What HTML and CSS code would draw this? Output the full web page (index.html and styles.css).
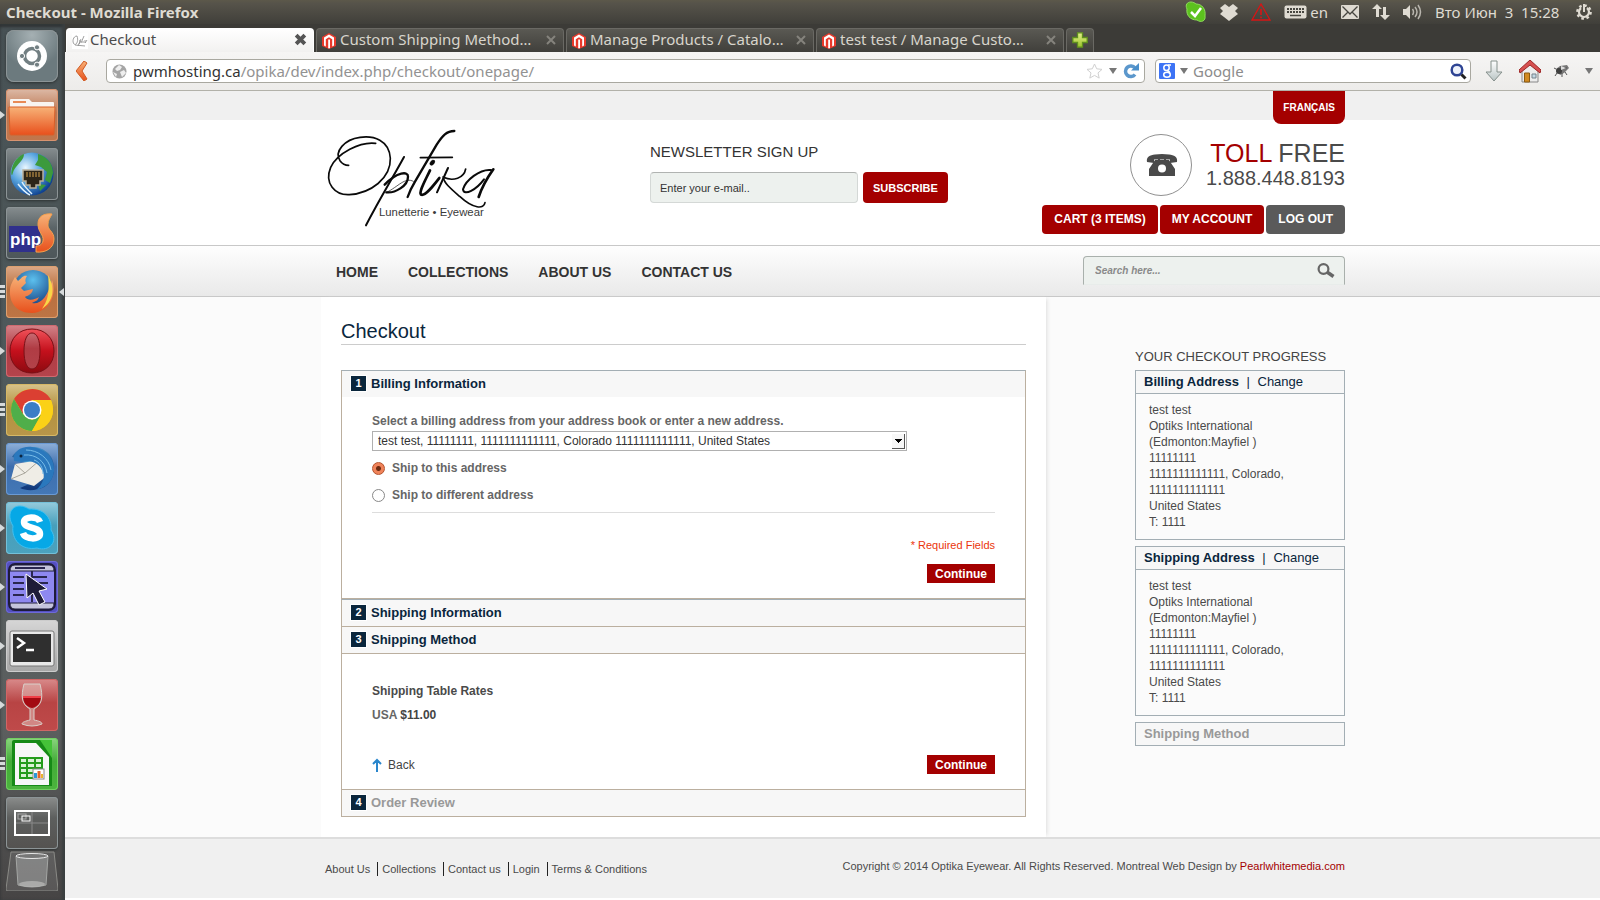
FILE: index.html
```html
<!DOCTYPE html>
<html lang="en">
<head>
<meta charset="utf-8">
<title>Checkout</title>
<link rel="stylesheet" href="styles.css">
</head>
<body>
<svg class="defs" aria-hidden="true">
  <defs>
    <linearGradient id="gOrange" x1="0" y1="0" x2="0" y2="1"><stop offset="0" stop-color="#f7b277"/><stop offset="1" stop-color="#e8501c"/></linearGradient>
    <linearGradient id="gRed" x1="0" y1="0" x2="0" y2="1"><stop offset="0" stop-color="#f0525a"/><stop offset=".5" stop-color="#c4101c"/><stop offset="1" stop-color="#8c0a10"/></linearGradient>
    <radialGradient id="gGlobe" cx=".35" cy=".35" r=".7"><stop offset="0" stop-color="#e8f6ff"/><stop offset=".5" stop-color="#5aa7e0"/><stop offset="1" stop-color="#0c3f8e"/></radialGradient>
    <radialGradient id="gBlue" cx=".5" cy=".25" r=".7"><stop offset="0" stop-color="#5cc0ee"/><stop offset="1" stop-color="#123a7c"/></radialGradient>
    <linearGradient id="gSilver" x1="0" y1="0" x2="0" y2="1"><stop offset="0" stop-color="#fff"/><stop offset="1" stop-color="#b9c4c4"/></linearGradient>
    <linearGradient id="gLime" x1="0" y1="0" x2="0" y2="1"><stop offset="0" stop-color="#e4f08a"/><stop offset="1" stop-color="#9cc42c"/></linearGradient>
    <symbol id="magento" viewBox="0 0 14 16"><path d="M7 0l7 4v9l-7 3-7-3V4z" fill="#e8392b"/><path d="M7 1.6L2 4.6v8l1.8.9V6.2L7 4.2l3.200 2v7.300L12 12.600v-8z" fill="#fff"/><path d="M6.200 6.500h1.800v8.500l-1 .4-.8-.4z" fill="#fff"/></symbol>
    <symbol id="close" viewBox="0 0 12 12"><path d="M2 2l8 8M10 2l-8 8" fill="none" stroke="currentColor" stroke-width="2"/></symbol>
    <symbol id="close-bold" viewBox="0 0 12 12"><path d="M2 2l8 8M10 2l-8 8" fill="none" stroke="currentColor" stroke-width="3.600"/></symbol>
    <symbol id="caret" viewBox="0 0 8 6"><path d="M0 0h8L4 6z" fill="currentColor"/></symbol>
  </defs>
</svg>

<header class="panel">
  <span class="panel-title">Checkout - Mozilla Firefox</span>
  <div class="indicators">
    <svg width="22" height="22" viewBox="0 0 22 22"><path d="M6 1C2 1 0 4 2 8c-1 6 3 11 10 11 4 3 9 1 8-4 1-7-3-12-9-12C10 2 8 1 6 1z" fill="#5cc21e" stroke="#8fdc5c"/><path d="M6 11l4 4 6-8" fill="none" stroke="#fff" stroke-width="2.500"/></svg>
    <svg width="18" height="18" viewBox="0 0 18 18" fill="#dfdbd2"><path d="M5 1l4 3 4-3 5 4-3 3 3 3-4 3-5 4-5-4-4-3 3-3-3-3z"/></svg>
    <svg width="20" height="18" viewBox="0 0 20 18" fill="none" stroke="#d81414"><path d="M10 1l9 16H1z" stroke-width="1.300"/><path d="M10 6v6M10 13.500v1.800" stroke-width="1.600"/></svg>
    <span class="lang"><svg width="23" height="14" viewBox="0 0 23 14"><rect x=".5" y=".5" width="22" height="13" rx="2" fill="#dfdbd2"/><path d="M3 4h17M3 7h17" stroke="#474640" stroke-width="2" stroke-dasharray="2 1"/><path d="M6 10.500h11" stroke="#474640" stroke-width="1.500"/></svg>en</span>
    <svg width="18" height="14" viewBox="0 0 18 14"><rect width="18" height="14" rx="1" fill="#dfdbd2"/><path d="M1.500 1.500L9 9l7.500-7.500M1.500 12.500L7 7M16.500 12.500L11 7" fill="none" stroke="#474640" stroke-width="1.300"/></svg>
    <svg width="18" height="18" viewBox="0 0 18 18" fill="#dfdbd2"><path d="M5 1l5 5H7v8H4V6H0zM13 17l-5-5h3V4h3v8h4z"/></svg>
    <svg width="19" height="16" viewBox="0 0 19 16"><path d="M0 5h3l4-4v14l-4-4H0z" fill="#dfdbd2"/><path d="M9.500 5q2 3 0 6M12 3q4 5 0 10M15 1q5 7 0 14" fill="none" stroke="#b9b6ae" stroke-width="1.500"/></svg>
    <time class="clock">Вто Июн&nbsp; 3 &nbsp;15:28</time>
    <svg width="16" height="16" viewBox="0 0 16 16" fill="none" stroke="#dfdbd2"><circle cx="8" cy="8" r="6.600" stroke-width="2.500" stroke-dasharray="2.600 2.580"/><path d="M5 4a5 5 0 1 0 6 0" stroke-width="2.200"/><path d="M8 0v8" stroke-width="2"/></svg>
  </div>
</header>

<div class="desktop">
  <nav class="launcher" aria-label="Launcher">
    <a href="#" class="tile t-dash" aria-label="Dash"><svg viewBox="0 0 52 52"><circle cx="26" cy="26" r="15" fill="#fff"/><circle cx="26" cy="26" r="7.500" fill="none" stroke="#727f82" stroke-width="3.500"/><g fill="#727f82" stroke="#fff"><circle cx="16" cy="26" r="2.600"/><circle cx="31" cy="17.300" r="2.600"/><circle cx="31" cy="34.700" r="2.600"/></g></svg></a>
    <a href="#" class="tile t-files run" aria-label="Files"><svg viewBox="0 0 52 52"><path d="M4 11q0-1 1-1h18l3 3h21q1 0 1 1v5H4z" fill="#f8f4f0"/><path d="M7 13h13" stroke="#e88a55" stroke-width="2"/><path d="M3 18h46l-1 27q0 1-1 1H5q-1 0-1-1z" fill="url(#gOrange)" stroke="#d8602a"/></svg></a>
    <a href="#" class="tile" aria-label="Network"><svg viewBox="0 0 52 52"><circle cx="26" cy="26" r="21.500" fill="url(#gGlobe)"/><path d="M7 17c2-5 6-9 11-11 0 5-4 8-8 13s-3 8-4 8-1-5 1-10zM32 6c8 2 15 9 15 19l-3 10-5-3 2-8-6-5-6-2 3-5zM32 36l8 1-6 6z" fill="#3c9a3c"/><path d="M12 36c3 4 6 8 12 11M16 34c2 4 6 8 10 12" stroke="#dff2ff" fill="none" stroke-width="1.500"/><path d="M17 22h20v11h-3v4h-4v3h-6v-3h-4v-4h-3z" fill="#2c2518" stroke="#b9b09a" stroke-width="1.500"/><path d="M21 24v5M24 24v5M27 24v5M30 24v5M33 24v5" stroke="#d4a24c"/></svg></a>
    <a href="#" class="tile" aria-label="PhpStorm"><svg viewBox="0 0 52 52"><rect x="3" y="19" width="31" height="26" fill="#30308c"/><text x="4" y="38" class="php">php</text><path d="M46 7c-9-1-14 3-14 10 0 9 6 10 5 17-1 4-4 5-7 5v6c10 1 18-4 18-13 0-8-7-9-6-15 0-4 2-6 4-10z" fill="url(#gOrange)" stroke="#f7a04c"/></svg></a>
    <a href="#" class="tile t-fox multi active" aria-label="Firefox"><svg viewBox="0 0 52 52"><circle cx="27" cy="24" r="20" fill="url(#gBlue)"/><path d="M46 14c5 15-2 32-20 33C10 47 3 36 4 24c0-5 3-9 5-13l3 4c4-3 5-6 9-5-2 3-2 5-1 7l-5 5 3 3 9-2c-1 7-8 7-8 8 3 5 11 2 14 0-2 4-1 3-7 6 8 2 16-6 20-23z" fill="url(#gOrange)"/><path d="M42 9c8 14 5 27-6 34 5-8 8-14 6-34z" fill="#f8d648"/></svg></a>
    <a href="#" class="tile t-opera run" aria-label="Opera"><svg viewBox="0 0 52 52"><path fill-rule="evenodd" d="M26 4c13 0 22 9 22 22s-9 22-22 22S4 39 4 26 13 4 26 4zm0 4c-5 0-8 7-8 18s3 18 8 18 8-7 8-18-3-18-8-18z" fill="url(#gRed)" stroke="#7a1016"/></svg></a>
    <a href="#" class="tile t-chrome multi" aria-label="Chrome"><svg viewBox="0 0 52 52"><circle cx="26" cy="26" r="21" fill="#f9c80e"/><path d="M8 15C16 2 37 1 45 16H26l-9 14z" fill="#db3f32"/><path d="M8 15C0 29 9 46 26 47l9-16-9 5-9-6z" fill="#4fae4a"/><path d="M26 16h19c1 2 2 6 2 10 0 11-9 21-21 21l9-16z" fill="#fbd117"/><circle cx="26" cy="26" r="9.500" fill="#fff"/><circle cx="26" cy="26" r="8" fill="#3b7dc6"/></svg></a>
    <a href="#" class="tile t-bird run" aria-label="Thunderbird"><svg viewBox="0 0 52 52"><path d="M6 14C12 3 32 0 42 10c10 10 7 28-4 34-8 4-18 4-24 1L30 38 16 16z" fill="url(#gBlue)"/><path d="M9 21l25-4 8 15-14 11L5 36z" fill="#efede6"/><path d="M9 21l10 9 15-13M19 30L5 36" stroke="#a9a69c" fill="none"/><path d="M8 18C6 8 16 3 26 4c14 2 23 12 22 24-1 10-8 17-18 19 7-6 10-14 6-20-4-8-12-10-20-8z" fill="#2a78bd"/><path d="M20 7c12 0 23 8 25 20M18 12c12-1 21 6 23 18M28 17c6 2 9 8 9 14" stroke="#77bce8" fill="none"/><circle cx="15" cy="13" r="1.500" fill="#0c2540"/></svg></a>
    <a href="#" class="tile t-skype run" aria-label="Skype"><svg viewBox="0 0 52 52"><path d="M14 4c4 0 7 2 9 3 15-1 23 9 22 21 8 12-2 22-14 18C15 49 5 37 7 24 0 12 6 4 14 4z" fill="#06a8e6" stroke="#3fc0f0"/><path d="M34 20c-2-6-16-6-16 0 0 7 16 4 16 12 0 6-15 6-17-1" fill="none" stroke="#fff" stroke-width="6.500"/></svg></a>
    <a href="#" class="tile t-pointer run" aria-label="Synergy"><svg viewBox="0 0 52 52"><rect x="3" y="3" width="46" height="46" rx="6" fill="#8e88f0" stroke="#1e1c3a" stroke-width="2"/><path d="M4 10q0-6 5-6h34q5 0 5 6zM4 42h44q0 6-5 6H9q-5 0-5-6z" fill="#c4c4dc" stroke="#1e1c3a"/><path d="M9 7h30M7 16h11M7 22h11M7 28h11M7 34h11M26 16h15M33 22h9M26 10v31" stroke="#29264f" stroke-width="2"/><path d="M20 13l1 24 6-5 6 12 6-3-6-11 8-2z" fill="#1e1c38" stroke="#fff"/></svg></a>
    <a href="#" class="tile t-term run" aria-label="Terminal"><svg viewBox="0 0 52 52"><rect x="4" y="11" width="44" height="35" rx="2" fill="#e8e8e8" stroke="#777"/><rect x="7" y="14" width="38" height="28" fill="#2f2f2f"/><path d="M11 18l7 5-7 5M20 30h8" fill="none" stroke="#fff" stroke-width="2.500"/></svg></a>
    <a href="#" class="tile t-wine run" aria-label="Wine"><svg viewBox="0 0 52 52"><path d="M18 5h16c3 12 3 20-6 25v11c5 1 8 2 8 4q-10 4-20 0c0-2 4-3 8-4V30c-9-5-9-13-6-25z" fill="#e6c5c0" fill-opacity=".5" stroke="#d9cfc9"/><path d="M17 17h18c0 6-3 11-9 12-6-1-9-6-9-12z" fill="#a30a12"/><path d="M17 18h18" stroke="#f04048" stroke-width="2"/></svg></a>
    <a href="#" class="tile t-calc multi" aria-label="Calc"><svg viewBox="0 0 52 52"><path d="M8 2h36q2 0 2 2v44H6V4q0-2 2-2z" fill="#168a16"/><path d="M34 2h12v18z" fill="#45c238"/><path d="M9 5h21l13 14v28H9z" fill="#f7f7f7"/><path d="M14 20h22v20H14zM14 25h22M14 30h22M14 35h22M21 20v20M29 20v20" stroke="#259c1c" stroke-width="2" fill="#d9f2d4"/><rect x="27" y="31" width="11" height="10" fill="#fff" stroke="#888"/><path d="M29.500 40v-5" stroke="#2a98d8" stroke-width="3"/><path d="M33 40v-7" stroke="#e2662a" stroke-width="3"/><path d="M36 40v-4" stroke="#e8b42c" stroke-width="2"/></svg></a>
    <a href="#" class="tile t-glass" aria-label="Workspaces"><svg viewBox="0 0 52 52" fill="none" stroke="#fff"><rect x="9" y="14" width="34" height="24" stroke-width="2"/><path d="M26 15v22M10 26h32" stroke="#8a8a8a"/><rect x="12" y="17" width="8" height="5" stroke="#aaa"/><rect x="16" y="19" width="8" height="5"/></svg></a>
    <a href="#" class="tile t-trash" aria-label="Trash"><svg viewBox="0 0 52 40"><path d="M5 1h43l4 37q0 2-2 2H2q-2 0-2-2z" fill="#fff" fill-opacity=".1" stroke="#8a8a86"/><path d="M10 5h32l-2 29q-14 4-28 0z" fill="#c9cccc" fill-opacity=".35" stroke="#a4a6a4"/><ellipse cx="26" cy="5" rx="16" ry="2.500" fill="#777" stroke="#e6e6e6"/><ellipse cx="26" cy="33" rx="13" ry="3" fill="#c6c6c4" fill-opacity=".6"/></svg></a>
  </nav>

  <div class="browser">
    <div class="tabs">
      <div class="tab current"><svg width="16" height="16" viewBox="0 0 16 16"><rect width="16" height="16" fill="#fff"/><path d="M5 3C1 3 0 9 2 11s5-3 3-8M6 13l3-7M7 8q3-1 0 3M12 3L9 10M11 8v2M13 7v3l2-3M3 12l10 1" fill="none" stroke="#888" stroke-width=".8"/></svg><span>Checkout</span><button aria-label="Close tab"><svg width="13" height="13"><use href="#close-bold"/></svg></button></div>
      <div class="tab"><svg width="14" height="16"><use href="#magento"/></svg><span>Custom Shipping Method…</span><button aria-label="Close tab"><svg width="12" height="12"><use href="#close"/></svg></button></div>
      <div class="tab"><svg width="14" height="16"><use href="#magento"/></svg><span>Manage Products / Catalo…</span><button aria-label="Close tab"><svg width="12" height="12"><use href="#close"/></svg></button></div>
      <div class="tab"><svg width="14" height="16"><use href="#magento"/></svg><span>test test / Manage Custo…</span><button aria-label="Close tab"><svg width="12" height="12"><use href="#close"/></svg></button></div>
      <button class="new-tab" aria-label="New tab"><svg width="16" height="16" viewBox="0 0 16 16"><path d="M5.500.8h5v4.700h4.700v5h-4.700v4.700h-5v-4.700H.8v-5h4.700z" fill="url(#gLime)" stroke="#5f8f1e" stroke-width="1.300"/></svg></button>
    </div>
    <div class="toolbar">
      <button class="back" aria-label="Back"><svg width="12" height="20" viewBox="0 0 12 20"><path d="M8 0l3 2-5 8 5 8-3 2-8-10z" fill="url(#gOrange)" stroke="#d05a22"/></svg></button>
      <div class="address">
        <svg width="15" height="15" viewBox="0 0 15 15"><circle cx="7.500" cy="7.500" r="7" fill="#a5a5a5"/><path d="M7 1l3 2-2 3-3 1-2-2zM8 8l4-2 2 3-4 4zM1 8l4 2-1 3z" fill="#eee"/></svg>
        <a class="url" href="#"><b>pwmhosting.ca</b>/opika/dev/index.php/checkout/onepage/</a>
        <svg class="star" width="17" height="16" viewBox="0 0 17 16"><path d="M8.500 1l2.200 4.800 5.300.6-4 3.500 1.200 5.200-4.700-2.700-4.700 2.700L5 9.900 1 6.400l5.300-.6z" fill="#fff" stroke="#d0d0d0"/></svg>
        <svg width="8" height="6" color="#777"><use href="#caret"/></svg>
        <svg width="16" height="16" viewBox="0 0 16 16"><path d="M12 5A5.300 5.300 0 1 0 12 11.500" fill="none" stroke="#5b97cc" stroke-width="3.500"/><path d="M8 7.500h8V0z" fill="#4a8fca"/></svg>
      </div>
      <div class="search">
        <svg width="16" height="16" viewBox="0 0 16 16"><rect width="16" height="16" rx="1" fill="#3d73f5"/><g fill="none" stroke="#fff" stroke-width="1.500"><ellipse cx="7.500" cy="4.800" rx="2.700" ry="2.800"/><ellipse cx="8" cy="11.800" rx="3.300" ry="2.500"/><path d="M8 7.500q3 1 2.500 3M9 2h3"/></g></svg>
        <svg width="8" height="6" color="#777"><use href="#caret"/></svg>
        <input type="text" placeholder="Google" aria-label="Google">
        <svg width="17" height="17" viewBox="0 0 17 17"><circle cx="7" cy="7" r="5.300" fill="#eef2fb" stroke="#2e4494" stroke-width="2.500"/><path d="M11.500 11.500l4 4" stroke="#222" stroke-width="3"/></svg>
      </div>
      <svg class="dl" width="18" height="22" viewBox="0 0 18 22"><path d="M6 1h6v11h5l-8 9-8-9h5z" fill="url(#gSilver)" stroke="#85908c"/></svg>
      <svg class="home" width="22" height="23" viewBox="0 0 22 23"><path d="M3 11v11h16V11l-8-8z" fill="#ececec" stroke="#888"/><path d="M5.500 13h5v9h-5z" fill="#d28a20" stroke="#8b5a10"/><path d="M13 14h4v4h-4z" fill="#c4d8e4" stroke="#75838c"/><path d="M1 13L0 10 11 0l11 10-1 3-10-8z" fill="#d65050" stroke="#9c2626"/></svg>
      <svg class="fly" width="16" height="14" viewBox="0 0 16 14"><path d="M2 5l4-3 7-1 2 3-5 5-4 2z" fill="#777"/><circle cx="5" cy="7" r="3" fill="#3f3f3f"/><path d="M2 5L0 4M3 9l-2 3M8 9v4M11 8l2 3M6 3l7 1" stroke="#555" fill="none"/><path d="M7 2l5 2-5 2z" fill="#ddd"/></svg>
      <svg width="8" height="6" color="#777"><use href="#caret"/></svg>
    </div>

    <div class="page">
      <div class="top-strip"><div class="wrap"><a class="language" href="#">FRANÇAIS</a></div></div>
      <header class="site-header">
        <div class="wrap head">
          <a class="logo" href="#" aria-label="Optika">
            <svg width="176" height="104" viewBox="33 48 528 312" fill="none" stroke="#0a0a0a" stroke-linecap="round">
              <path d="M197 100C150 94 82 130 62 172C42 220 75 256 118 254C182 250 243 205 241 145C238 90 190 76 150 82C103 88 72 125 90 152C97 162 108 166 116 166" stroke-width="5"/>
              <path d="M282 141C250 200 210 265 168 346" stroke-width="6"/><path d="M224 224C262 185 295 183 294 200C294 228 255 250 229 247" stroke-width="7"/>
              <path d="M433 63C410 63 398 76 380 104L315 215Q300 240 293 261" stroke-width="7"/><path d="M331 143L427 142" stroke-width="5"/>
              <path d="M230 247C265 230 285 200 310 214" stroke-width="2"/>
              <path d="M360 181C344 215 326 246 333 254C345 260 368 230 388 204" stroke-width="8"/><ellipse cx="367" cy="158" rx="9" ry="6" transform="rotate(-50 367 158)" fill="#0a0a0a"/>
              <path d="M414 174L381 247" stroke-width="6"/><path d="M467 177C462 204 430 215 400 202C402 220 425 238 450 260C490 297 522 298 525 278" stroke-width="5"/>
              <path d="M543 180C510 176 466 212 459 238C462 260 500 238 522 208" stroke-width="6"/><path d="M550 178Q520 220 506 261" stroke-width="8"/>
              <text x="207" y="318" class="logo-sub">Lunetterie • Eyewear</text>
            </svg>
          </a>
          <form class="newsletter">
            <label for="email">NEWSLETTER SIGN UP</label>
            <div class="news-row"><input id="email" type="text" value="Enter your e-mail.."><button type="button">SUBSCRIBE</button></div>
          </form>
          <div class="contact">
            <div class="phone">
              <svg width="62" height="62" viewBox="0 0 62 62"><circle cx="31" cy="31" r="30.500" fill="#fff" stroke="#909090"/><g transform="translate(17 20)" fill="#4a4a4a"><path d="M0 8C-1 3 3 1 8 .5Q15-.5 22 .5C27 1 31 3 30 8L23 9V5.500H7V9z"/><path d="M8 6h3v-2h2v2h4v-2h2v2h3l6 9v7H2v-7z"/><circle cx="15" cy="14.500" r="4" fill="#fff"/></g></svg>
              <p><span class="toll"><em>TOLL</em> FREE</span><span class="number">1.888.448.8193</span></p>
            </div>
            <div class="account"><a href="#">CART (3 ITEMS)</a><a href="#">MY ACCOUNT</a><a href="#" class="out">LOG OUT</a></div>
          </div>
        </div>
      </header>
      <div class="site-nav">
        <div class="wrap nav-row">
          <nav><a href="#">HOME</a><a href="#">COLLECTIONS</a><a href="#">ABOUT US</a><a href="#">CONTACT US</a></nav>
          <form class="site-search"><input type="text" placeholder="Search here..." aria-label="Search"><button type="button" aria-label="Search"><svg width="18" height="16" viewBox="0 0 18 16"><circle cx="6.500" cy="6" r="4.900" fill="none" stroke="#666" stroke-width="2.200"/><path d="M10 9l6.500 4.500" stroke="#666" stroke-width="3.500"/></svg></button></form>
        </div>
      </div>

      <div class="wrap body">
        <main>
          <h1>Checkout</h1>
          <ol class="steps">
            <li class="step cool">
              <h2><b>1</b>Billing Information</h2>
              <div class="step-body billing">
                <label class="lead" for="addr">Select a billing address from your address book or enter a new address.</label>
                <div class="select"><select id="addr"><option>test test, 11111111, 1111111111111, Colorado 1111111111111, United States</option></select></div>
                <label class="radio"><input type="radio" name="ship" checked>Ship to this address</label>
                <label class="radio"><input type="radio" name="ship">Ship to different address</label>
                <hr>
                <p class="required">* Required Fields</p>
                <div class="actions"><button type="button">Continue</button></div>
              </div>
            </li>
            <li class="step second"><h2><b>2</b>Shipping Information</h2></li>
            <li class="step">
              <h2><b>3</b>Shipping Method</h2>
              <div class="step-body method">
                <p class="rate">Shipping Table Rates</p>
                <p class="price">USA <b>$11.00</b></p>
                <div class="actions split"><a href="#"><svg width="10" height="14" viewBox="0 0 10 14" fill="none" stroke="#2a86cc" stroke-width="2"><path d="M5 14V2M1 6l4-4 4 4"/></svg>Back</a><button type="button">Continue</button></div>
              </div>
            </li>
            <li class="step off"><h2><b>4</b>Order Review</h2></li>
          </ol>
        </main>
        <aside>
          <h2>YOUR CHECKOUT PROGRESS</h2>
          <section><h3>Billing Address <i>|</i> <a href="#">Change</a></h3>
            <address>test test<br>Optiks International<br>(Edmonton:Mayfiel )<br>11111111<br>1111111111111, Colorado,<br>1111111111111<br>United States<br>T: 1111</address></section>
          <section><h3>Shipping Address <i>|</i> <a href="#">Change</a></h3>
            <address>test test<br>Optiks International<br>(Edmonton:Mayfiel )<br>11111111<br>1111111111111, Colorado,<br>1111111111111<br>United States<br>T: 1111</address></section>
          <section class="off"><h3>Shipping Method</h3></section>
        </aside>
      </div>

      <footer class="site-footer">
        <div class="wrap foot">
          <nav><a href="#">About Us</a><a href="#">Collections</a><a href="#">Contact us</a><a href="#">Login</a><a href="#">Terms &amp; Conditions</a></nav>
          <p>Copyright © 2014 Optika Eyewear. All Rights Reserved. Montreal Web Design by <a href="#">Pearlwhitemedia.com</a></p>
        </div>
      </footer>
    </div>
  </div>
</div>
</body>
</html>
```
FILE: styles.css
```css
* { box-sizing: border-box; }
body {
  margin: 0;
  min-height: 100vh;
  display: flex;
  flex-direction: column;
  font-family: "Liberation Sans", Arial, sans-serif;
  font-size: 12px;
  color: #4a4a4a;
}
h1, h2, h3, p, ol { margin: 0; padding: 0; }
a { color: inherit; text-decoration: none; }
button { border: 0; padding: 0; background: none; font: inherit; color: inherit; cursor: pointer; }
svg { flex: none; display: block; }
.defs { position: absolute; width: 0; height: 0; }

/* desktop panel */
.panel {
  height: 24px;
  flex: none;
  display: flex;
  align-items: center;
  justify-content: space-between;
  padding: 0 8px 0 6px;
  background: linear-gradient(#5c584a, #56534a 15%, #403f3a);
  color: #dfdbd2;
  font-family: "Noto Sans", sans-serif;
  font-size: 15px;
}
.panel-title { font-weight: 700; }
.indicators { display: flex; align-items: center; gap: 13px; }
.lang { display: flex; align-items: center; gap: 3px; }
.clock { min-width: 128px; }
.desktop { flex: 1; display: flex; }

/* launcher */
.launcher {
  width: 65px;
  flex: none;
  padding: 6px 7px 0 6px;
  display: flex;
  flex-direction: column;
  gap: 7px;
  background: linear-gradient(#475154, #505a5c 45%, #5c5f5f 80%, #464444);
  box-shadow: inset -3px 0 3px #3a3f40, inset 0 3px 3px #2e3233;
}
.tile {
  position: relative;
  height: 52px;
  border-radius: 4px;
  background: linear-gradient(#868d8f, #5b6467 40%, #4d5659);
  box-shadow: inset 0 0 0 1px #8c9496, 0 1px 3px #2c3030;
}
.tile svg { width: 52px; height: 52px; }
.php { font: 700 17px "Liberation Sans", sans-serif; fill: #fff; }
.t-dash { background: radial-gradient(circle at 50% 10%, #a5b0b3, #6c7a7e 60%); border-radius: 8px; }
.t-files { background: linear-gradient(#dcb9a6, #bd7650 45%, #c0764c); box-shadow: inset 0 0 0 1px #d89470; }
.t-fox { background: linear-gradient(#dca987, #b96f3f 45%, #bd7545); box-shadow: inset 0 0 0 1px #dda070; }
.t-opera { background: linear-gradient(#d4848a, #b03c44 45%, #b4444c); box-shadow: inset 0 0 0 1px #cf6a70; }
.t-chrome { background: linear-gradient(#d8c48c, #b3923f 45%, #b8964a); box-shadow: inset 0 0 0 1px #d6b866; }
.t-bird { background: linear-gradient(#8fb0d8, #3d6eae 45%, #4478b6); box-shadow: inset 0 0 0 1px #6a9ad4; }
.t-skype { background: linear-gradient(#96cbdc, #479fbb 45%, #4ba2be); box-shadow: inset 0 0 0 1px #74c0d8; }
.t-pointer { background: #5450c0; box-shadow: inset 0 0 0 1px #6e6ad8; }
.t-term { background: linear-gradient(#d6d6d6, #a6a6a6); box-shadow: inset 0 0 0 1px #ccc; }
.t-wine { background: linear-gradient(#d88a8a, #b84444 45%, #bf4a4a); box-shadow: inset 0 0 0 1px #d06666; }
.t-calc { background: linear-gradient(#8cd480, #43ac38 45%, #4cb43e); box-shadow: inset 0 0 0 1px #70d060; }
.t-glass { background: linear-gradient(#8b8d8c, #5d5f5e 40%, #545250); }
.t-trash { height: 40px; margin-top: -5px; background: none; box-shadow: none; }
.t-trash svg { height: 40px; }
.run::before, .multi::before {
  content: "";
  position: absolute;
  left: -6px;
  top: 22px;
  border: solid transparent;
  border-width: 4px 0 4px 5px;
  border-left-color: #d6dadb;
}
.multi::before {
  width: 5px;
  height: 13px;
  top: 19px;
  border: 0;
  background: repeating-linear-gradient(#d6dadb 0 3px, transparent 3px 5px);
}
.active::after {
  content: "";
  position: absolute;
  right: -6px;
  top: 22px;
  border: solid transparent;
  border-width: 4px 5px 4px 0;
  border-right-color: #d6dadb;
}

/* browser window */
.browser { flex: 1; min-width: 0; display: flex; flex-direction: column; }
.tabs {
  height: 28px;
  flex: none;
  display: flex;
  align-items: flex-end;
  gap: 2px;
  padding-left: 1px;
  background: #3c3b37;
  font-family: "Noto Sans", sans-serif;
  font-size: 15px;
}
.tab {
  flex: 0 1 248px;
  min-width: 0;
  height: 24px;
  display: flex;
  align-items: center;
  gap: 4px;
  padding: 0 6px 0 5px;
  border: 1px solid #6a6964;
  border-bottom: 0;
  border-radius: 4px 4px 0 0;
  background: linear-gradient(#5a5953, #403f3b);
  color: #d8d5cc;
}
.tab span { flex: 1; padding-bottom: 3px; line-height: 20px; white-space: nowrap; overflow: hidden; }
.tab button { color: #85837d; }
.tab button svg { margin-bottom: 2px; }
.tab.current { background: linear-gradient(#fff, #f2f1f0); border-color: #fff; color: #4c4c4c; gap: 2px; }
.tab.current button { color: #555; }
.new-tab {
  width: 28px;
  height: 24px;
  display: grid;
  place-items: center;
  border: 1px solid #6a6964;
  border-bottom: 0;
  border-radius: 4px 4px 0 0;
  background: linear-gradient(#5a5953, #403f3b);
}
.new-tab svg { margin-bottom: 2px; }
.toolbar {
  height: 39px;
  flex: none;
  display: flex;
  align-items: center;
  padding: 0 7px 0 11px;
  background: linear-gradient(#f6f5f4, #edecea);
  border-bottom: 1px solid #b2b1a9;
  font-family: "Noto Sans", sans-serif;
  font-size: 15px;
}
.address, .search {
  height: 24px;
  display: flex;
  align-items: center;
  gap: 6px;
  padding: 0 5px;
  background: #fff;
  border: 1px solid #a9a8a0;
  border-radius: 4px;
}
.address { flex: 1; margin: 0 10px 0 18px; color: #929292; }
.address b { font-weight: 400; color: #333; }
.url { flex: 1; white-space: nowrap; overflow: hidden; }
.search { flex: 0 1 316px; gap: 5px; padding: 0 3px; margin-right: 14px; }
.search input { flex: 1; min-width: 0; border: 0; padding: 0; outline: 0; background: none; font: inherit; }
.search input::placeholder { color: #8c8c8c; }
.home { margin: 0 13px 0 16px; }
.fly { margin-right: 15px; }

/* site */
.page { flex: 1; display: flex; flex-direction: column; background: #fbfbfb; border-bottom: 2px solid #fff; }
.wrap { width: 100%; max-width: 1025px; margin: 0 auto; padding-left: 1px; }
.top-strip { height: 29px; background: #f0f0f0; }
.top-strip .wrap { display: flex; justify-content: flex-end; }
.language {
  position: relative;
  height: 33px;
  padding: 0 10px;
  line-height: 33px;
  background: #a40000;
  color: #fff;
  font-size: 10px;
  font-weight: 700;
  border-radius: 0 0 8px 8px;
}
.site-header { background: #fff; border-bottom: 1px solid #c8c8c8; }
.head { display: flex; min-height: 125px; }
.logo { padding: 6px 0 0; }
.logo-sub { font: 34px "Liberation Sans Narrow", "Liberation Sans", sans-serif; fill: #3a3a3a; stroke: none; }
.newsletter { margin: 21px auto 0 153px; }
.newsletter label { display: block; font-size: 15px; line-height: 22px; margin-bottom: 9px; color: #333; }
.news-row { display: flex; gap: 5px; }
.news-row input {
  width: 208px;
  height: 31px;
  padding: 0 9px;
  border: 1px solid #d4d8d6;
  border-top-color: #b0b3b1;
  border-radius: 4px;
  background: #edf1ee;
  font: 11px "Liberation Sans", sans-serif;
  color: #333;
}
.news-row button { height: 31px; padding: 0 10px; border-radius: 4px; background: #a40000; color: #fff; font-size: 11px; font-weight: 700; }
.contact { padding-top: 14px; display: flex; flex-direction: column; align-items: flex-end; gap: 9px; }
.phone { display: flex; gap: 14px; }
.phone p { display: flex; flex-direction: column; align-items: flex-end; padding-top: 5px; }
.toll { font-size: 25px; line-height: 28px; }
.toll em { font-style: normal; color: #a40000; }
.number { font-size: 20px; line-height: 22px; }
.account { display: flex; gap: 2px; }
.account a { height: 29px; line-height: 29px; padding: 0 12px; border-radius: 4px; background: #a40000; color: #fff; font-weight: 700; }
.account .out { background: #5a5a5a; }
.site-nav { background: linear-gradient(#fefefe, #e9e9e9); border-bottom: 1px solid #c8c8c8; }
.nav-row { display: flex; justify-content: space-between; align-items: flex-start; min-height: 50px; }
.nav-row nav { display: flex; gap: 30px; padding: 18px 0 0 15px; font-size: 14px; font-weight: 700; color: #333; }
.site-search {
  width: 262px;
  height: 29px;
  margin-top: 10px;
  display: flex;
  align-items: center;
  padding: 0 9px 0 11px;
  border: 1px solid #a9b0ac;
  border-bottom-color: #e8ecea;
  border-radius: 4px 4px 0 0;
  background: #edf1ee;
}
.site-search input { flex: 1; min-width: 0; border: 0; padding: 0; background: none; outline: 0; font: italic 700 10px "Liberation Sans", sans-serif; }
.site-search input::placeholder { color: #8a8a8a; }

.body { flex: 1; display: flex; justify-content: space-between; }
main { flex: 0 1 725px; padding: 23px 20px 20px; background: #fff; box-shadow: 3px 0 4px -2px #ddd; }
h1 { font-size: 20px; font-weight: 400; line-height: 22px; padding-bottom: 2px; color: #0a263c; border-bottom: 1px solid #ccc; margin-bottom: 25px; }
.steps { list-style: none; }
.step { border: 1px solid #bbaf9f; border-top: 0; }
.step.cool, .step.second { border-top: 1px solid #a3aeb4; }
.step h2 { display: flex; align-items: center; gap: 5px; height: 26px; padding: 0 0 2px 9px; background: #f7f7f7; font-size: 13px; color: #0a263c; }
.step h2 b { width: 15px; height: 15px; line-height: 15px; text-align: center; background: #0a263c; color: #fff; font-size: 11px; outline: 1px solid #fff; }
.step.off h2 { color: #999; }
.step-body { padding: 16px 30px 15px; }
.step-body button { height: 19px; padding: 0 8px; background: #a40000; color: #fff; font-size: 12px; font-weight: 700; }
.lead { display: block; line-height: 16px; margin-bottom: 2px; font-weight: 700; color: #666; }
.select { position: relative; width: 535px; max-width: 100%; }
.select select {
  display: block;
  width: 100%;
  height: 20px;
  padding: 0 5px;
  appearance: none;
  border: 1px solid #b0b0b0;
  border-radius: 0;
  background: #fff;
  font: 12px "Liberation Sans", sans-serif;
  color: #333;
}
.select::after {
  content: "";
  position: absolute;
  right: 2px;
  top: 3px;
  width: 12px;
  height: 14px;
  border-right: 1px solid #555;
  border-bottom: 1px solid #555;
  background: linear-gradient(#000, #000) 3px 5px / 7px 1px no-repeat, linear-gradient(#000, #000) 4px 6px / 5px 1px no-repeat, linear-gradient(#000, #000) 5px 7px / 3px 1px no-repeat, linear-gradient(#000, #000) 6px 8px / 1px 1px no-repeat, #f7f7f7;
  pointer-events: none;
}
.radio { display: flex; align-items: center; gap: 7px; margin-top: 11px; height: 16px; font-weight: 700; color: #666; }
.select + .radio { margin-top: 9px; }
.radio input { appearance: none; width: 13px; height: 13px; margin: 0; border: 1px solid #888; border-radius: 50%; background: #fff; }
.radio input:checked { border-color: #b4532c; background: radial-gradient(circle, #6b2a10 0 2px, #f0835a 3px); }
.step-body hr { border: 0; border-top: 1px solid #ddd; margin: 9px 0 24px; }
.required { text-align: right; font-size: 11px; line-height: 16px; color: #eb340a; margin-bottom: 11px; }
.actions { display: flex; justify-content: flex-end; }
.split { justify-content: space-between; }
.actions a { display: flex; align-items: center; gap: 6px; color: #444; }
.method { border-top: 1px solid #bbaf9f; padding-top: 29px; }
.rate, .price { font-weight: 700; line-height: 16px; margin-bottom: 8px; }
.price { color: #666; margin-bottom: 32px; }
.price b { color: #444; }

aside { width: 210px; flex: none; padding-top: 52px; }
aside h2 { font-size: 13px; font-weight: 400; line-height: 16px; margin-bottom: 5px; color: #444; }
aside section { border: 1px solid #a3aeb4; margin-bottom: 6px; }
aside h3 { height: 22px; line-height: 22px; padding-left: 8px; font-size: 13px; color: #0a263c; background: #f7f7f7; }
aside h3 a, aside h3 i { font-weight: 400; font-style: normal; }
aside h3 i { margin: 0 4px; }
address { border-top: 1px solid #a3aeb4; padding: 8px 13px 9px; font-style: normal; line-height: 16px; }
aside .off h3 { color: #999; }

.site-footer { background: #f0f0f0; border-top: 2px solid #ddd; min-height: 61px; font-size: 11px; }
.foot { display: flex; justify-content: space-between; align-items: flex-start; padding-top: 20px; }
.foot nav { display: flex; gap: 4px; padding: 3px 0 0 4px; }
.foot nav a { line-height: 14px; padding-right: 7px; border-right: 1px solid #222; }
.foot nav a:last-child { border: 0; }
.foot p { line-height: 14px; }
.foot p a { color: #a40000; }
```
